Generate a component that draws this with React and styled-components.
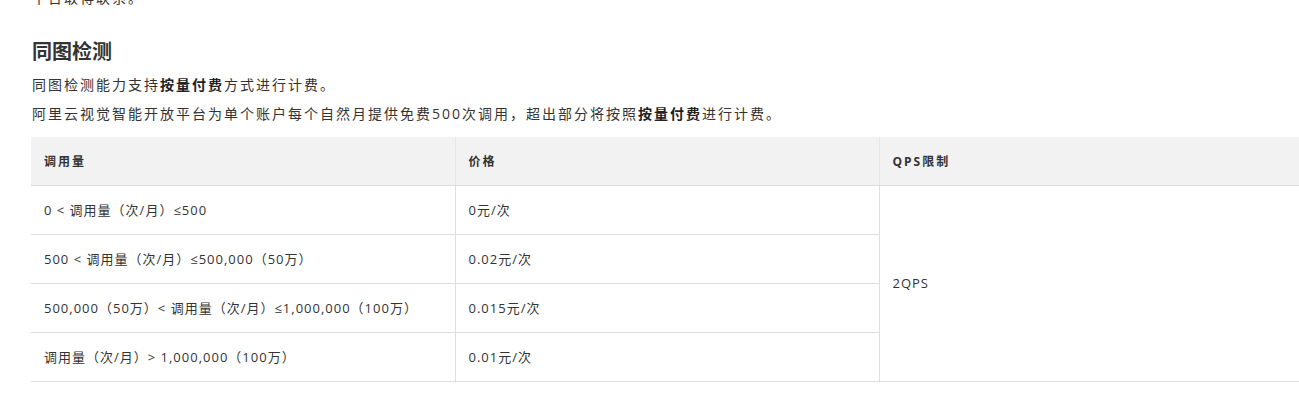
import React from "react";
import styled, { createGlobalStyle } from "styled-components";

const Global = createGlobalStyle`
  html, body { margin: 0; padding: 0; background: #fff; overflow: hidden; }
  body {
    font-family: "Open Sans", "Noto Sans CJK SC", sans-serif;
    color: #333;
  }
`;

const Page = styled.div`
  padding: 0 31px;
  width: 1272px;
`;

const Para = styled.p`
  margin: ${(p) => p.$mt || 0}px 0 0 1px;
  font-size: 14px;
  line-height: 22px;
  letter-spacing: 2px;
  color: #333;
  white-space: nowrap;
  b { font-weight: 700; color: #222; }
`;

const Heading = styled.h3`
  margin: 29px 0 0 1px;
  font-size: 20px;
  line-height: 28px;
  font-weight: 700;
  color: #333;
`;

const Table = styled.table`
  margin-top: 12px;
  width: 1272px;
  border-collapse: collapse;
  table-layout: fixed;
`;

const Th = styled.th`
  background: #f2f2f2;
  height: 48px;
  padding: 0 13px;
  text-align: left;
  font-size: 12px;
  font-weight: 700;
  letter-spacing: 2px;
  color: #333;
  border-bottom: 1px solid #dddddd;
  border-left: ${(p) => (p.$first ? "none" : "1px solid #e6e6e6")};
  box-sizing: border-box;
`;

const Td = styled.td`
  height: 49px;
  padding: 0 13px;
  font-size: 13px;
  letter-spacing: 1px;
  color: #333;
  vertical-align: middle;
  white-space: nowrap;
  border-bottom: 1px solid #dddddd;
  border-left: ${(p) => (p.$first ? "none" : "1px solid #dddddd")};
  box-sizing: border-box;
`;

const rows = [
  ["0 < 调用量（次/月）≤500", "0元/次"],
  ["500 < 调用量（次/月）≤500,000（50万）", "0.02元/次"],
  ["500,000（50万）< 调用量（次/月）≤1,000,000（100万）", "0.015元/次"],
  ["调用量（次/月）> 1,000,000（100万）", "0.01元/次"],
];

export default function App() {
  return (
    <>
      <Global />
      <Page>
        <Para $mt={-13}>平台取得联系。</Para>
        <Heading>同图检测</Heading>
        <Para $mt={8}>
          同图检测能力支持<b>按量付费</b>方式进行计费。
        </Para>
        <Para $mt={7}>
          阿里云视觉智能开放平台为单个账户每个自然月提供免费500次调用，超出部分将按照<b>按量付费</b>进行计费。
        </Para>
        <Table>
          <thead>
            <tr>
              <Th $first>调用量</Th>
              <Th>价格</Th>
              <Th>QPS限制</Th>
            </tr>
          </thead>
          <tbody>
            {rows.map((r, i) => (
              <tr key={i}>
                <Td $first>{r[0]}</Td>
                <Td>{r[1]}</Td>
                {i === 0 && <Td rowSpan={4}>2QPS</Td>}
              </tr>
            ))}
          </tbody>
        </Table>
      </Page>
    </>
  );
}
